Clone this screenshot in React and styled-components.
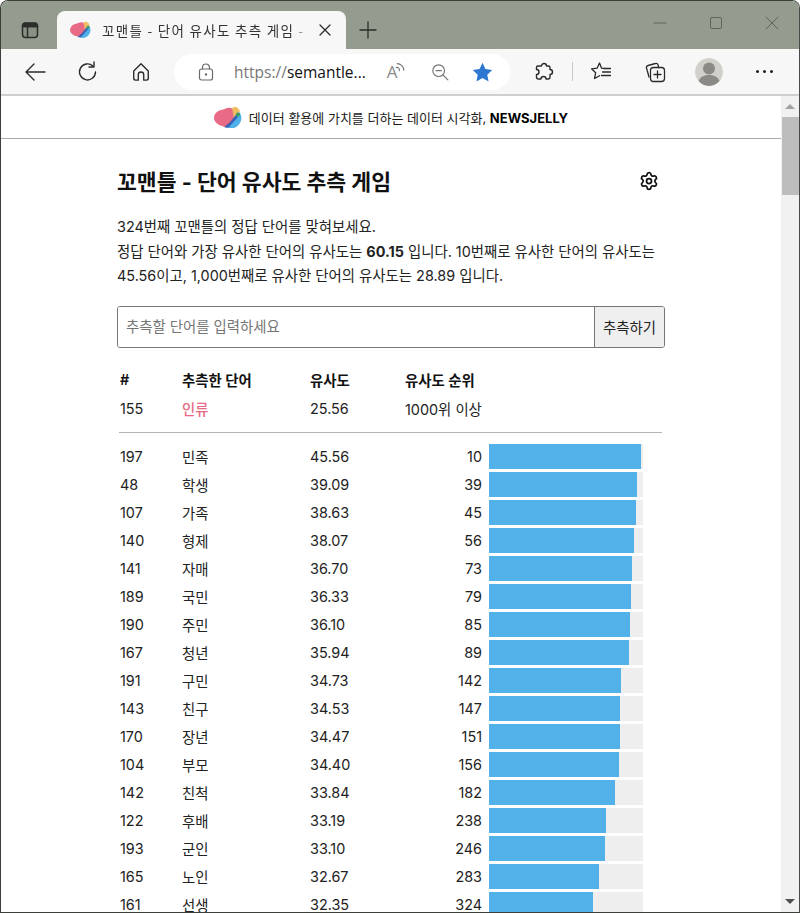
import React from 'react'
import styled, { createGlobalStyle } from 'styled-components'
import { Settings } from 'lucide-react'

const guesses = [
  [197, '민족', '45.56', 10],
  [48, '학생', '39.09', 39],
  [107, '가족', '38.63', 45],
  [140, '형제', '38.07', 56],
  [141, '자매', '36.70', 73],
  [189, '국민', '36.33', 79],
  [190, '주민', '36.10', 85],
  [167, '청년', '35.94', 89],
  [191, '구민', '34.73', 142],
  [143, '친구', '34.53', 147],
  [170, '장년', '34.47', 151],
  [104, '부모', '34.40', 156],
  [142, '친척', '33.84', 182],
  [122, '후배', '33.19', 238],
  [193, '군인', '33.10', 246],
  [165, '노인', '32.67', 283],
  [161, '선생', '32.35', 324],
]

const Blob = ({ size }) => (
  <svg width={size} height={size * 0.82} viewBox="0 0 28 23">
    <path d="M19 3C15 0 11 3 7 4 3 5 0 8 0 12s4 7 8 8c3 1 6 2 8 0l6-9z" fill="#e96a84" />
    <path d="M18 2c3-2 7-1 8 4l-6 6z" fill="#f0bd62" />
    <path d="M25 6c3 3 3 8 1 11-2 4-8 7-13 5l8-12z" fill="#4fb0ea" />
    <path d="M22 9l2 2-9 10c-2 1-3 1-5 0 2-1 5-4 7-6z" fill="#3a5fb5" />
    <circle cx="24" cy="8.500" r="2" fill="#3d9a5f" />
  </svg>
)

const Icon = ({ children, size = 22, view = 24, width = 1.6 }) => (
  <svg width={size} height={size} viewBox={`0 0 ${view} ${view}`} fill="none" stroke="currentColor" strokeWidth={width} strokeLinecap="round" strokeLinejoin="round">
    {children}
  </svg>
)

const App = () => (
  <Frame>
    <GlobalStyle />
    <TabStrip>
      <TabsButton>
        <Icon size={20} view={20} width={1.5}>
          <rect x="2.5" y="3" width="15" height="14.5" rx="3" fill="#4d5048" fillOpacity="0.15" />
          <path d="M2.5 6.5h15M7.5 6.5v11" />
          <path d="M4 3.5h12v3H4z" fill="#2d2f2b" />
        </Icon>
      </TabsButton>
      <Tab>
        <Blob size={21} />
        <TabTitle>꼬맨틀 - 단어 유사도 추측 게임 -</TabTitle>
        <TabClose>
          <Icon size={14} view={14} width={1.3}><path d="M2 2l10 10M12 2L2 12" /></Icon>
        </TabClose>
      </Tab>
      <NewTab>
        <Icon size={18} view={18} width={1.3}><path d="M9 1v16M1 9h16" /></Icon>
      </NewTab>
      <WindowControls>
        <WindowButton>
          <Icon size={14} view={14} width={1}><path d="M1 7h12" /></Icon>
        </WindowButton>
        <WindowButton>
          <Icon size={14} view={14} width={1}><rect x="1.5" y="1.5" width="11" height="11" rx="1.5" /></Icon>
        </WindowButton>
        <WindowButton>
          <Icon size={14} view={14} width={1}><path d="M1 1l12 12M13 1L1 13" /></Icon>
        </WindowButton>
      </WindowControls>
    </TabStrip>

    <Toolbar>
      <ToolSlot $w={53}>
        <Icon view={22} size={22} width={1.4}><path d="M21 11H2M10 3l-8 8 8 8" /></Icon>
      </ToolSlot>
      <ToolSlot $w={53}>
        <Icon view={22} size={22} width={1.4}>
          <path d="M18.5 11a8 8 0 1 1-2.6-6" />
          <path d="M17 1v5h-5" />
        </Icon>
      </ToolSlot>
      <ToolSlot $w={53}>
        <Icon view={22} size={20} width={1.5}>
          <path d="M3 10l8-8 8 8v8a2 2 0 0 1-2 2h-3v-6a3 3 0 0 0-6 0v6H5a2 2 0 0 1-2-2z" />
        </Icon>
      </ToolSlot>
      <AddressBar>
        <LockSlot>
          <Icon view={18} size={18} width={1.2}>
            <rect x="2.5" y="6" width="13" height="11" rx="2" />
            <path d="M5.5 6V4.5a3.5 3.5 0 0 1 7 0V6" />
            <circle cx="9" cy="11.5" r="0.6" fill="currentColor" />
          </Icon>
        </LockSlot>
        <Url><span>https://</span>semantle...</Url>
        <AddressIcon $w={37}>
          <ReadAloud>A</ReadAloud>
          <Waves>
            <Icon view={10} size={11} width={1}><path d="M1 5a2.500 2.500 0 0 1 3 3M2 1.500a6 6 0 0 1 6 6" /></Icon>
          </Waves>
        </AddressIcon>
        <AddressIcon $w={49}>
          <Icon view={20} size={18} width={1.3}>
            <circle cx="8.5" cy="8.5" r="6.5" />
            <path d="M13.3 13.3l5.5 5.5M5.5 8.5h6" />
          </Icon>
        </AddressIcon>
        <AddressIcon $w={37} $color="#2f78d2">
          <svg width="21" height="20" viewBox="0 0 22 21"><path fill="currentColor" d="M11 .8l3.1 6.6 7.1.9-5.2 5 1.4 7.2L11 16.9l-6.4 3.6L6 13.3.8 8.3l7.1-.9z" /></svg>
        </AddressIcon>
      </AddressBar>
      <ToolSlot $w={54} $ml={7}>
        <Icon view={20} size={20} width={1.4}>
          <path d="M7.500 4a2.500 2.500 0 0 1 5 0h2a1.500 1.500 0 0 1 1.500 1.500v2a2.500 2.500 0 0 1 0 5V15a2 2 0 0 1-2 2h-2a2.500 2.500 0 0 0-5 0H4.500a2 2 0 0 1-2-2v-2.500a2.500 2.500 0 0 0 0-5v-2A1.500 1.500 0 0 1 4 4z" />
        </Icon>
      </ToolSlot>
      <ToolDivider />
      <ToolSlot $w={54}>
        <Icon view={22} size={22} width={1.3}>
          <path d="M14.500 7.500l-3-.4L9.500 2 7.200 7.100 1.500 7.800l4.200 3.900L4.500 17.500l5-2.800" />
          <path d="M14.500 7.500h6M12.500 11h8M11.500 14.500h9" />
        </Icon>
      </ToolSlot>
      <ToolSlot $w={53}>
        <Icon view={22} size={22} width={1.3}>
          <path d="M5 16L2.500 7a2 2 0 0 1 1.500-2.500L11.500 2.500a2 2 0 0 1 2.500 1.300L14.700 6.500" />
          <rect x="6.500" y="6.500" width="14" height="14" rx="3" />
          <path d="M13.500 10v7M10 13.500h7" />
        </Icon>
      </ToolSlot>
      <ToolSlot $w={56}>
        <Avatar>
          <svg width="28" height="28" viewBox="0 0 28 28">
            <circle cx="14" cy="14" r="14" fill="#d2d0cb" />
            <circle cx="14" cy="10.500" r="6" fill="#8c8a86" />
            <path d="M3.500 23c2-4.500 6-6 10.500-6s8.500 1.500 10.500 6A14 14 0 0 1 14 28 14 14 0 0 1 3.500 23z" fill="#8c8a86" />
          </svg>
        </Avatar>
      </ToolSlot>
      <ToolSlot $w={55}>
        <Dots><i /><i /><i /></Dots>
      </ToolSlot>
    </Toolbar>

    <Viewport>
      <Page>
        <Banner>
          <Blob size={28} />
          <span>데이터 활용에 가치를 더하는 데이터 시각화, <strong>NEWSJELLY</strong></span>
        </Banner>
        <Main>
          <TitleRow>
            <Title>꼬맨틀 - 단어 유사도 추측 게임</Title>
            <GearButton><Settings size={20} strokeWidth={2.1} /></GearButton>
          </TitleRow>
          <Intro>
            324번째 꼬맨틀의 정답 단어를 맞혀보세요.<br />
            정답 단어와 가장 유사한 단어의 유사도는 <b>60.15</b> 입니다. 10번째로 유사한 단어의 유사도는<br />
            45.56이고, 1,000번째로 유사한 단어의 유사도는 28.89 입니다.
          </Intro>
          <GuessForm>
            <GuessInput placeholder="추측할 단어를 입력하세요" readOnly />
            <GuessButton type="button">추측하기</GuessButton>
          </GuessForm>
          <HeadRow>
            <span>#</span>
            <span>추측한 단어</span>
            <span>유사도</span>
            <span>유사도 순위</span>
          </HeadRow>
          <Row>
            <span>155</span>
            <LatestWord>인류</LatestWord>
            <span>25.56</span>
            <span>1000위 이상</span>
          </Row>
          <Rule />
          {guesses.map(([id, word, score, rank]) => (
            <Row key={id}>
              <span>{id}</span>
              <span>{word}</span>
              <span>{score}</span>
              <Rank>{rank}</Rank>
              <BarTrack>
                <BarFill style={{ width: `${(1000 - rank) / 10}%` }} />
              </BarTrack>
            </Row>
          ))}
        </Main>
      </Page>
      <Scrollbar>
        <ScrollArrow $up />
        <ScrollThumb />
        <ScrollSpace />
        <ScrollArrow />
      </Scrollbar>
    </Viewport>
  </Frame>
)

export default App

// Styled Components
const GlobalStyle = createGlobalStyle`
  html, body {
    margin: 0;
    padding: 0;
    background: #fff;
    overflow: hidden;
  }
  * {
    box-sizing: border-box;
  }
`

const Frame = styled.div`
  width: 800px;
  height: 913px;
  display: flex;
  flex-direction: column;
  overflow: hidden;
  border: 1px solid #3c3f3a;
  border-right-color: #4a4a4a;
  border-radius: 8px 8px 0 0;
  font-family: Inter, "Noto Sans CJK KR", sans-serif;
  color: #1c1c1c;
`

const TabStrip = styled.div`
  height: 48px;
  flex: none;
  display: flex;
  align-items: flex-end;
  background: #949c8f;
  color: #2b2d2a;
`

const TabsButton = styled.div`
  width: 56px;
  height: 38px;
  padding-left: 19px;
  display: flex;
  align-items: center;
`

const Tab = styled.div`
  width: 289px;
  height: 38px;
  display: flex;
  align-items: center;
  padding: 0 11px 0 13px;
  background: #f7f7f7;
  border-radius: 8px 8px 0 0;
`

const TabTitle = styled.span`
  flex: 1;
  margin-left: 11px;
  font-family: "Noto Sans CJK KR", sans-serif;
  font-size: 13.5px;
  letter-spacing: 1.3px;
  color: #333;
  white-space: nowrap;
  mask-image: linear-gradient(to right, #000 92%, transparent 100%);
`

const TabClose = styled.div`
  width: 20px;
  margin-left: 6px;
  display: flex;
  justify-content: center;
`

const NewTab = styled.div`
  width: 44px;
  height: 38px;
  display: flex;
  align-items: center;
  justify-content: center;
`

const WindowControls = styled.div`
  margin-left: auto;
  height: 48px;
  display: flex;
  color: #5f645c;
`

const WindowButton = styled.div`
  width: 56px;
  height: 28px;
  margin-top: 8px;
  display: flex;
  align-items: center;
  justify-content: center;
  padding-left: 2px;
`

const Toolbar = styled.div`
  height: 47px;
  flex: none;
  display: flex;
  align-items: center;
  padding-left: 7px;
  background: #f7f7f7;
  border-bottom: 2px solid #cfcfcf;
  color: #2b2b2b;
`

const ToolSlot = styled.div`
  width: ${(p) => p.$w}px;
  margin-left: ${(p) => p.$ml || 0}px;
  flex: none;
  display: flex;
  justify-content: center;
  align-items: center;
`

const AddressBar = styled.div`
  width: 336px;
  height: 36px;
  margin-left: 7px;
  display: flex;
  align-items: center;
  flex: none;
  background: #fff;
  border-radius: 18px;
`

const LockSlot = styled.div`
  width: 60px;
  padding-left: 23px;
  display: flex;
  color: #6a6a6a;
`

const Url = styled.div`
  width: 144px;
  font-family: "Open Sans", sans-serif;
  font-size: 15.5px;
  color: #111;
  white-space: nowrap;

  span {
    color: #777;
  }
`

const AddressIcon = styled.div`
  width: ${(p) => p.$w}px;
  display: flex;
  align-items: flex-start;
  justify-content: center;
  color: ${(p) => p.$color || '#777'};
`

const ReadAloud = styled.span`
  font-family: "Open Sans", sans-serif;
  font-size: 17px;
  line-height: 20px;
  color: #8a8a8a;
`

const Waves = styled.span`
  display: flex;
  margin-left: -2px;
`

const ToolDivider = styled.div`
  width: 1px;
  height: 19px;
  margin: 0 1px;
  background: #c8c8c8;
`

const Avatar = styled.div`
  width: 28px;
  height: 28px;
  border-radius: 50%;
  overflow: hidden;
`

const Dots = styled.div`
  display: flex;
  gap: 4px;

  i {
    width: 3px;
    height: 3px;
    border-radius: 50%;
    background: #222;
  }
`

const Viewport = styled.div`
  flex: 1;
  min-height: 0;
  display: flex;
  overflow: hidden;
  background: #fff;
`

const Page = styled.div`
  width: 780px;
  flex: none;
`

const Banner = styled.div`
  height: 43px;
  display: flex;
  align-items: center;
  justify-content: center;
  gap: 7px;
  border-bottom: 1px solid #a9a9a9;
  font-size: 13px;
  color: #1a1a1a;

  strong {
    color: #000;
    font-weight: 700;
  }
`

const Main = styled.main`
  width: 548px;
  margin-left: 116px;
`

const TitleRow = styled.div`
  height: 76px;
  padding-top: 8px;
  display: flex;
  align-items: center;
  justify-content: space-between;
`

const Title = styled.h1`
  margin: 0 0 2px;
  font-size: 21.6px;
  font-weight: 700;
  color: #111;
`

const GearButton = styled.div`
  display: flex;
  margin-right: 6px;
  color: #111;
`

const Intro = styled.p`
  margin: 0;
  font-size: 14.4px;
  line-height: 24.5px;
  color: #222;

  b {
    font-weight: 700;
  }
`

const GuessForm = styled.div`
  height: 42px;
  margin-top: 17px;
  display: flex;
  border: 1px solid #767676;
  border-radius: 3px;
  overflow: hidden;
`

const GuessInput = styled.input`
  flex: 1;
  min-width: 0;
  padding: 0 8px;
  border: none;
  outline: none;
  font-family: inherit;
  font-size: 14.4px;

  &::placeholder {
    color: #757575;
  }
`

const GuessButton = styled.button`
  width: 70px;
  padding: 0;
  border: none;
  border-left: 1px solid #767676;
  background: #efefef;
  font-family: inherit;
  font-size: 14.4px;
  color: #222;
`

const Row = styled.div`
  height: 28px;
  display: grid;
  grid-template-columns: 62px 128px 95px 77px 154px;
  align-items: center;
  padding-left: 3px;
  font-size: 14.4px;
  color: #222;
`

const HeadRow = styled(Row)`
  margin-top: 18px;
  margin-bottom: 1px;
  font-weight: 600;
  color: #111;

  span:nth-child(4) {
    grid-column: 4 / 6;
  }
`

const LatestWord = styled.span`
  color: #e96a84;
  font-weight: 500;
`

const Rule = styled.hr`
  width: 543px;
  margin: 9px 0 10px 2px;
  border: none;
  border-top: 1px solid #b5b5b5;
`

const Rank = styled.span`
  text-align: right;
`

const BarTrack = styled.div`
  width: 154px;
  height: 25px;
  margin-left: 7px;
  background: #eeeeee;
`

const BarFill = styled.div`
  height: 100%;
  background: #52b1e9;
`

const Scrollbar = styled.div`
  width: 18px;
  flex: none;
  display: flex;
  flex-direction: column;
  background: #f1f1f1;
`

const ScrollArrow = styled.div`
  height: 21px;
  flex: none;
  display: flex;
  align-items: center;
  justify-content: center;

  &::before {
    content: '';
    border-left: 5px solid transparent;
    border-right: 5px solid transparent;
    border-bottom: ${(p) => (p.$up ? '5px solid #a3a3a3' : 'none')};
    border-top: ${(p) => (p.$up ? 'none' : '5px solid #505050')};
  }
`

const ScrollThumb = styled.div`
  height: 78px;
  flex: none;
  margin-left: 1px;
  background: #bdbdbd;
`

const ScrollSpace = styled.div`
  flex: 1;
`
